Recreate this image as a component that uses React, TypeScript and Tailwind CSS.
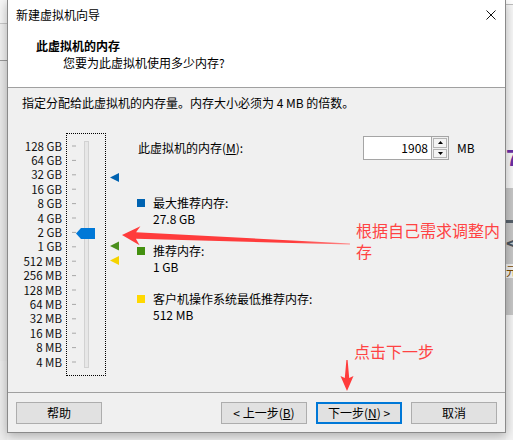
import React from "react";

const labels = [
  "128 GB", "64 GB", "32 GB", "16 GB", "8 GB", "4 GB", "2 GB", "1 GB",
  "512 MB", "256 MB", "128 MB", "64 MB", "32 MB", "16 MB", "8 MB", "4 MB",
];

function Btn({ children, primary }: { children: React.ReactNode; primary?: boolean }) {
  return (
    <div
      className={
        "h-[22px] w-[86px] flex items-center justify-center bg-[#e1e1e1] leading-[16px] " +
        (primary ? "border-2 border-[#0078d7]" : "border border-[#adadad]")
      }
    >
      {children}
    </div>
  );
}

function Legend({ color, title, value }: { color: string; title: string; value: string }) {
  return (
    <div className="flex items-start">
      <div className={"w-[8px] h-[8px] mt-[4px] " + color} />
      <div className="ml-[8px] leading-[16px]">
        <div>{title}</div>
        <div>{value}</div>
      </div>
    </div>
  );
}

export default function App() {
  return (
    <div className="relative flex w-[513px] h-[440px] overflow-hidden bg-[#f0f0f0] text-[12px] text-black font-['Noto_Sans_CJK_SC','Noto_Sans',sans-serif]">
      {/* left desktop strip */}
      <div className="w-[7px] flex flex-col shrink-0">
        <div className="h-[23px] bg-[#f6f6f6]" />
        <div className="h-[1px] bg-[#c8c8c8]" />
        <div className="h-[36px] bg-[#f0f0f0]" />
        <div className="h-[1px] bg-[#9a9a9a]" />
        <div className="h-[300px] bg-[#e9e9e9]" />
        <div className="flex-1 bg-[#ececec]" />
      </div>

      {/* dialog */}
      <div className="relative z-10 flex flex-col w-[499px] h-[433px] shrink-0 border-x border-b border-[#8a8a8a] bg-[#f0f0f0] shadow-[0_3px_10px_rgba(0,0,0,0.28)]">
        {/* header */}
        <div className="h-[88px] bg-white border-b border-[#a0a0a0] shrink-0">
          <div className="h-[30px] flex items-center justify-between pl-[8px] pr-[9px]">
            <span className="leading-[16px]">新建虚拟机向导</span>
            <svg width="10" height="10" viewBox="0 0 10 10">
              <path d="M0.5 0.5 L9.5 9.5 M9.5 0.5 L0.5 9.5" stroke="#111" strokeWidth="1" />
            </svg>
          </div>
          <div className="mt-[8px] pl-[28px] font-bold leading-[16px]">此虚拟机的内存</div>
          <div className="mt-[1px] pl-[55px] leading-[16px]">您要为此虚拟机使用多少内存?</div>
        </div>

        {/* body */}
        <div className="flex-1 flex flex-col">
          <div className="mt-[7px] pl-[14px] leading-[16px]">
            指定分配给此虚拟机的内存量。内存大小必须为 4 MB 的倍数。
          </div>
          <div className="mt-[22px] flex items-start">
            {/* labels */}
            <div className="w-[54px] pt-[6px] flex flex-col">
              {labels.map((l) => (
                <div key={l} className="h-[14.4px] flex items-center justify-end text-[11.5px] leading-[13px] text-[#111] whitespace-nowrap">
                  {l}
                </div>
              ))}
            </div>
            {/* slider */}
            <div className="ml-[4px] w-[40px] h-[243px] border border-dotted border-black">
              <svg width="38" height="241" viewBox="0 0 38 241">
                {labels.map((l, i) => (
                  <rect key={l} x="5" y={12 + 14.4 * i - 0.5} width="4" height="1" fill="#a8a8a8" />
                ))}
                <rect x="17.5" y="7.5" width="4" height="226" fill="#e7e7e7" stroke="#d2d2d2" />
                <polygon points="9,99.5 14,94 28,94 28,105 14,105" fill="#0078d7" />
              </svg>
            </div>
            {/* markers */}
            <svg className="ml-[4px]" width="10" height="243" viewBox="0 0 10 243">
              <polygon points="0,44.5 9,40 9,49" fill="#0063b1" />
              <polygon points="0,113 9,108.5 9,117.5" fill="#4a8f1c" />
              <polygon points="0,127.5 9,123 9,132" fill="#f5d300" />
            </svg>
            {/* right column */}
            <div className="ml-[17px] pt-[3px] flex flex-col">
              <div className="flex items-center h-[24px]">
                <div className="w-[226px] pl-[1px] leading-[16px]">
                  此虚拟机的内存(<span className="underline">M</span>):
                </div>
                <div className="flex h-[24px]">
                  <div className="w-[69px] h-[24px] bg-white border border-[#a5a5a5] flex items-center justify-end pr-[3px] leading-[16px]">
                    1908
                  </div>
                  <div className="w-[17px] h-[24px] flex flex-col gap-[1px] p-[1px] border-y border-r border-[#a5a5a5] bg-[#f0f0f0]">
                    <div className="flex-1 border border-[#b4b4b4] bg-[#f3f3f3] flex items-center justify-center">
                      <svg width="5" height="3" viewBox="0 0 5 3">
                        <polygon points="2.5,0 5,3 0,3" fill="#000" />
                      </svg>
                    </div>
                    <div className="flex-1 border border-[#b4b4b4] bg-[#f3f3f3] flex items-center justify-center">
                      <svg width="5" height="3" viewBox="0 0 5 3">
                        <polygon points="0,0 5,0 2.5,3" fill="#000" />
                      </svg>
                    </div>
                  </div>
                  <div className="ml-[8px] flex items-center leading-[16px]">MB</div>
                </div>
              </div>
              <div className="mt-[35px] flex flex-col gap-[16px]">
                <Legend color="bg-[#0063b1]" title="最大推荐内存:" value="27.8 GB" />
                <Legend color="bg-[#43900f]" title="推荐内存:" value="1 GB" />
                <Legend color="bg-[#ffd800]" title="客户机操作系统最低推荐内存:" value="512 MB" />
              </div>
            </div>
          </div>
        </div>

        {/* footer */}
        <div className="h-[40px] shrink-0 border-t border-[#a0a0a0] pt-[9px] px-[8px] flex items-start">
          <Btn>帮助</Btn>
          <div className="ml-auto flex gap-[9px]">
            <Btn>
              &lt; 上一步(<span className="underline">B</span>)
            </Btn>
            <Btn primary>
              下一步(<span className="underline">N</span>) &gt;
            </Btn>
            <Btn>取消</Btn>
          </div>
        </div>
      </div>

      {/* right desktop strip */}
      <div className="w-[7px] flex flex-col shrink-0 overflow-hidden">
        <div className="h-[4px] bg-white" />
        <div className="h-[1px] bg-[#bdbdbd]" />
        <div className="h-[140px] bg-[#f7f7f7]" />
        <div className="h-[22px] bg-[#f7f7f7] text-[22px] leading-[22px] font-bold text-[#6a2ea5] whitespace-nowrap">7</div>
        <div className="h-[21px] bg-[#f7f7f7]" />
        <div className="h-[127px] bg-[#c6c6c6] flex flex-col">
          <div className="h-[32px]" />
          <div className="h-[3px] bg-[#56606a]" />
          <div className="h-[12px]" />
          <div className="h-[14px] text-[18px] leading-[14px] font-bold text-[#4a545e]">&lt;</div>
          <div className="h-[15px]" />
          <div className="h-[14px] bg-[#f0f0f0] text-[12px] leading-[14px] text-[#7a4a00] whitespace-nowrap">元</div>
        </div>
        <div className="flex-1 bg-[#f3f3f3]" />
      </div>

      {/* red annotations */}
      <svg className="absolute inset-0 z-20 pointer-events-none" width="513" height="440" viewBox="0 0 513 440">
        <defs>
          <linearGradient id="fade" x1="122" y1="0" x2="350" y2="0" gradientUnits="userSpaceOnUse">
            <stop offset="0" stopColor="#ff3c3c" />
            <stop offset="0.75" stopColor="#ff3c3c" />
            <stop offset="1" stopColor="#ff8a8a" />
          </linearGradient>
        </defs>
        <polygon
          points="122,235 140.4,226.2 136.1,232.3 350,243.4 350,244.6 135.9,238.8 139.6,245.2"
          fill="url(#fade)"
        />
        <polygon points="347,391 340.5,376 344.8,378 346.4,360 347.6,360 349.2,378 353.5,376" fill="#ff3c3c" />
      </svg>
      <div className="absolute z-20 left-[356px] top-[220px] w-[150px] text-[16px] leading-[21px] text-[#ff4343]">
        根据自己需求调整内存
      </div>
      <div className="absolute z-20 left-[354px] top-[341px] text-[16px] leading-[21px] text-[#ff4343]">
        点击下一步
      </div>
    </div>
  );
}
